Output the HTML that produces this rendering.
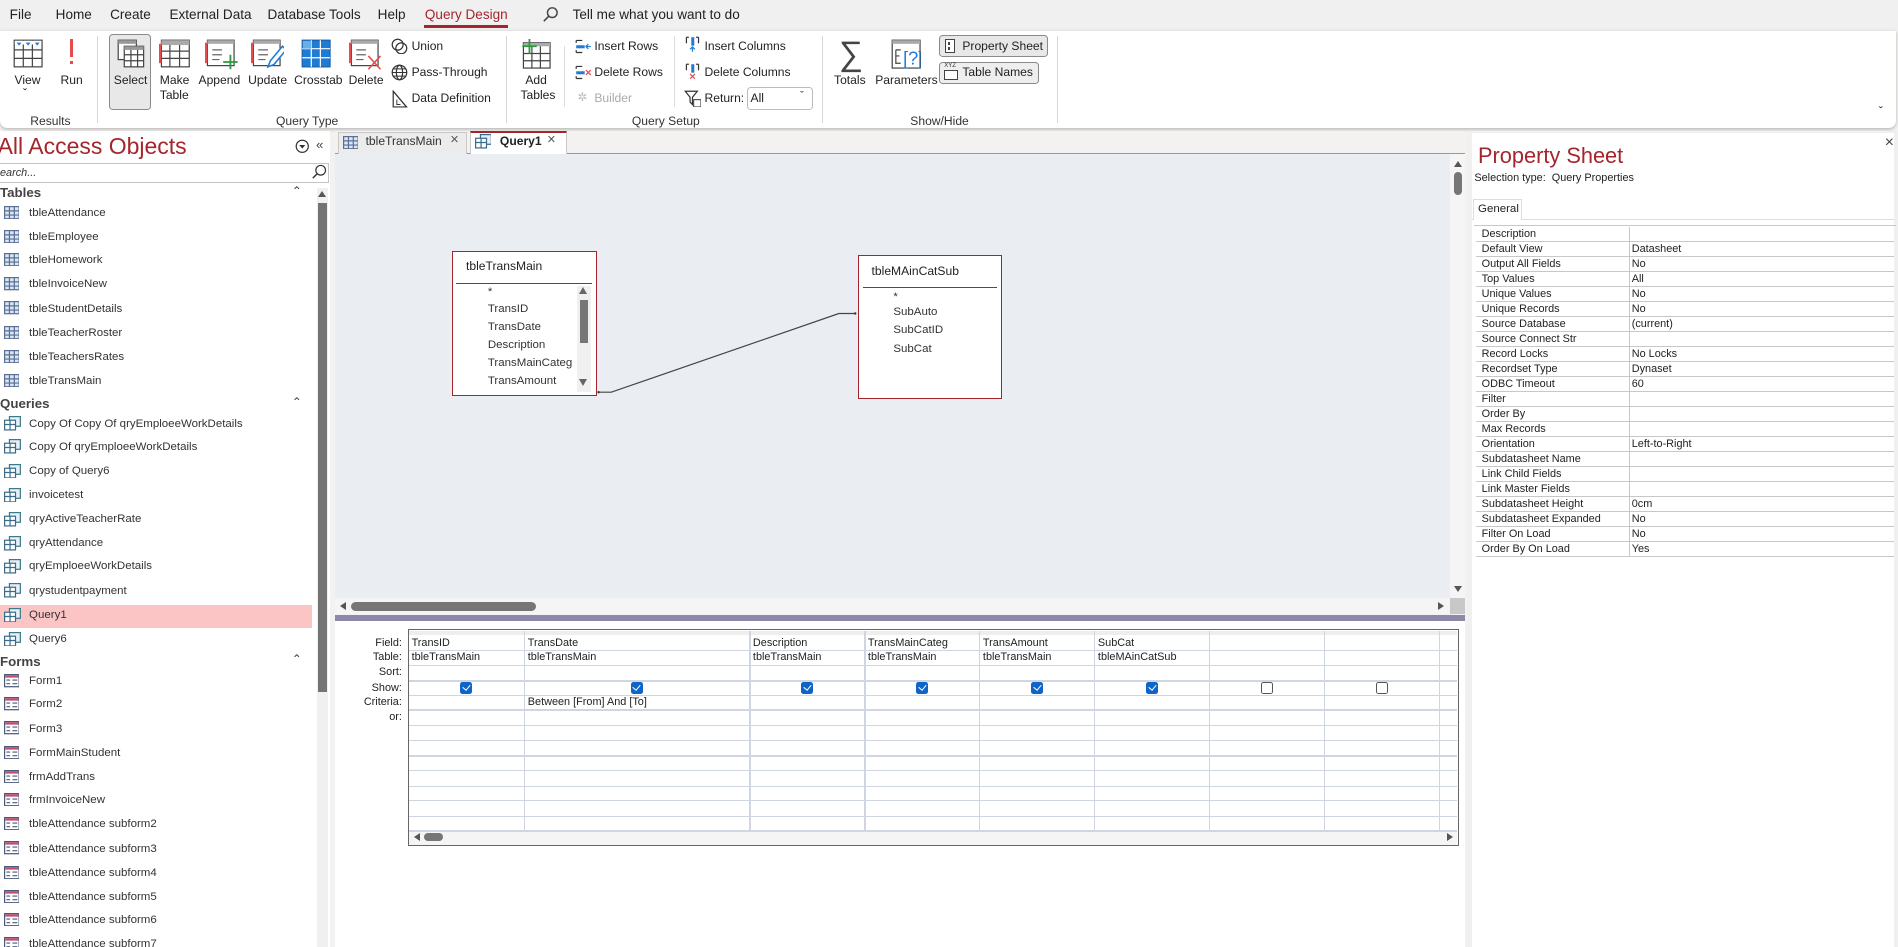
<!DOCTYPE html>
<html><head><meta charset="utf-8"><style>
*{margin:0;padding:0;box-sizing:border-box}
html,body{width:1898px;height:947px;overflow:hidden;background:#f3f2f1}
#r{zoom:1.2105;position:relative;width:1568px;height:782px;font-family:"Liberation Sans",sans-serif;color:#222;overflow:hidden;background:#f3f2f1}
.a{position:absolute;white-space:nowrap}
.m{font-size:11.2px;color:#222}
.s{font-size:10px}
.x{font-size:9.5px;color:#333}
.gl{font-size:10px;color:#333}
.sep{position:absolute;width:1px;background:#d6d6d6;top:30px;height:72px}
.ni{position:absolute;left:24px;font-size:9.5px;color:#333}
.ic{position:absolute;left:3px;width:14px;height:12px}
.ic svg{display:block}
.nh{position:absolute;left:0;font-size:11px;font-weight:bold;color:#444}
.pr{position:absolute;left:1219px;width:346px;height:12.4px;border-bottom:1.5px solid #c8c8c8;font-size:9px;color:#222}
.pr span{position:absolute;top:1px}
.pr i{position:absolute;left:127px;top:0;bottom:-1px;border-left:1.5px solid #c8c8c8}
.gr{position:absolute;left:338px;width:866px;height:1px;background:#cfd6e2}
.gc{position:absolute;top:521px;height:165px;width:1px;background:#cfd6e2}
.gt{position:absolute;font-size:9px;color:#222}
.gl2{position:absolute;right:1236px;font-size:9px;color:#222;text-align:right}
.cb{position:absolute;width:10px;height:10px;border-radius:2px;background:#0f64c8}
.cb:after{content:"";position:absolute;left:3px;top:1.5px;width:3px;height:5px;border:solid #fff;border-width:0 1px 1px 0;transform:rotate(40deg)}
.cbe{position:absolute;width:10px;height:10px;border-radius:2px;border:1px solid #555;background:#fff}
.fld{position:absolute;font-size:9.5px;color:#333}
</style></head><body><div id="r">
<div class="a" style="left:0;top:0;width:1568px;height:26px;background:#f0f0f0"></div>
<div class="a m" style="left:8px;top:6px">File</div>
<div class="a m" style="left:46px;top:6px">Home</div>
<div class="a m" style="left:91px;top:6px">Create</div>
<div class="a m" style="left:140px;top:6px">External Data</div>
<div class="a m" style="left:221px;top:6px">Database Tools</div>
<div class="a m" style="left:312px;top:6px">Help</div>
<div class="a m" style="left:351px;top:6px;color:#a4262c">Query Design</div>
<div class="a" style="left:350px;top:21px;width:70px;height:2px;background:#a4262c"></div>
<svg class="a" style="left:448px;top:5px" width="14" height="14"><circle cx="8.5" cy="5.5" r="4" fill="none" stroke="#444" stroke-width="1.2"/><line x1="5.5" y1="8.5" x2="1.5" y2="12.5" stroke="#444" stroke-width="1.3"/></svg>
<div class="a m" style="left:473px;top:6px">Tell me what you want to do</div>
<div class="a" style="left:0;top:26px;width:1566px;height:80px;background:#fff;border-radius:0 0 6px 6px;box-shadow:0 1px 3px rgba(0,0,0,.25)"></div>
<svg class="a" style="left:11px;top:32px" width="25" height="24"><rect x="1" y="1" width="23" height="22" fill="#fff" stroke="#444"/><line x1="1" y1="9" x2="24" y2="9" stroke="#444"/><line x1="1" y1="16" x2="24" y2="16" stroke="#444"/><line x1="8.5" y1="1" x2="8.5" y2="23" stroke="#444"/><line x1="16" y1="1" x2="16" y2="23" stroke="#444"/><rect x="1.5" y="1.5" width="22" height="3" fill="#fff"/><path d="M3 3h4l-2 2.5zM10.5 3h4l-2 2.5zM18 3h4l-2 2.5z" fill="#1e7bd6"/></svg>
<div class="a s" style="left:12px;top:60px">View</div>
<div class="a s" style="left:19px;top:71px">ˇ</div>
<div class="a" style="left:58px;top:32px;width:2px;height:15px;background:#e74c4c"></div>
<div class="a" style="left:58px;top:50px;width:2px;height:3px;background:#e74c4c"></div>
<div class="a s" style="left:50px;top:60px">Run</div>
<div class="sep" style="left:80px"></div>
<div class="a gl" style="left:25px;top:94px">Results</div>
<div class="a" style="left:90px;top:28px;width:35px;height:63px;background:#e8e8e8;border:1px solid #8a8a8a;border-radius:3px"></div>
<svg class="a" style="left:97px;top:32px" width="24" height="25"><rect x="1" y="1" width="15" height="16" fill="#fff" stroke="#444"/><rect x="1" y="1" width="15" height="3" fill="#999"/><rect x="6" y="6" width="16" height="17" fill="#fff" stroke="#444"/><rect x="6" y="6" width="16" height="3" fill="#999"/><path d="M6 13h16M6 18h16M11.5 9v14M17 9v14" stroke="#444" fill="none"/></svg>
<div class="a s" style="left:94px;top:60px">Select</div>
<svg class="a" style="left:131px;top:32px" width="26" height="24"><rect x="2" y="1" width="23" height="22" fill="#fff" stroke="#444"/><rect x="2" y="1" width="23" height="4" fill="#aaa"/><path d="M2 10h23M2 16h23M9 5v18M17 5v18" stroke="#444" fill="none"/><line x1="1" y1="4" x2="1" y2="20" stroke="#e74c4c" stroke-width="2"/></svg>
<div class="a s" style="left:132px;top:60px">Make</div><div class="a s" style="left:132px;top:73px">Table</div>
<svg class="a" style="left:169px;top:32px" width="28" height="26"><rect x="2" y="1" width="22" height="21" fill="#fff" stroke="#444"/><rect x="2" y="1" width="22" height="3" fill="#aaa"/><path d="M6 9h8M6 13h8M6 17h6" stroke="#666" fill="none"/><line x1="1" y1="3" x2="1" y2="20" stroke="#e74c4c" stroke-width="2"/><path d="M21 13v12M15 19h12" stroke="#2a9a3a" stroke-width="1.5"/></svg>
<div class="a s" style="left:164px;top:60px">Append</div>
<svg class="a" style="left:207px;top:32px" width="28" height="26"><rect x="2" y="1" width="22" height="21" fill="#fff" stroke="#444"/><rect x="2" y="1" width="22" height="3" fill="#aaa"/><path d="M6 9h8M6 13h8M6 17h6" stroke="#666" fill="none"/><line x1="1" y1="3" x2="1" y2="20" stroke="#e74c4c" stroke-width="2"/><path d="M26 6l-10 12-2 5 5-2 10-12z" fill="#fff" stroke="#1e7bd6" stroke-width="1.3"/></svg>
<div class="a s" style="left:205px;top:60px">Update</div>
<svg class="a" style="left:249px;top:32px" width="25" height="24"><rect x="1" y="1" width="23" height="22" fill="#1e7bd6" stroke="#1a5fa8"/><path d="M1 8h23M1 15.5h23M8.5 1v22M16 1v22" stroke="#fff" fill="none"/><rect x="1.5" y="1.5" width="7" height="6.5" fill="#6aaee8"/></svg>
<div class="a s" style="left:243px;top:60px">Crosstab</div>
<svg class="a" style="left:288px;top:32px" width="28" height="26"><rect x="2" y="1" width="22" height="21" fill="#fff" stroke="#444"/><rect x="2" y="1" width="22" height="3" fill="#aaa"/><path d="M6 9h8M6 13h8M6 17h6" stroke="#666" fill="none"/><line x1="1" y1="3" x2="1" y2="20" stroke="#e74c4c" stroke-width="2"/><path d="M16 14l10 11M26 14l-10 11" stroke="#e74c4c" stroke-width="1.3"/></svg>
<div class="a s" style="left:288px;top:60px">Delete</div>
<svg class="a" style="left:323px;top:31px" width="14" height="14"><circle cx="5.5" cy="5.5" r="4.5" fill="none" stroke="#333"/><circle cx="8.5" cy="8.5" r="4.5" fill="none" stroke="#333"/></svg>
<div class="a s" style="left:340px;top:32px">Union</div>
<svg class="a" style="left:323px;top:53px" width="14" height="14"><circle cx="7" cy="7" r="6" fill="none" stroke="#333"/><ellipse cx="7" cy="7" rx="2.6" ry="6" fill="none" stroke="#333"/><path d="M1 7h12M2 4h10M2 10h10" stroke="#333" fill="none" stroke-width=".8"/></svg>
<div class="a s" style="left:340px;top:54px">Pass-Through</div>
<svg class="a" style="left:324px;top:74px" width="13" height="15"><path d="M1 1v13h11z" fill="none" stroke="#333"/><path d="M1 1l11 13M4 8v4h3" stroke="#333" fill="none" stroke-width=".8"/></svg>
<div class="a s" style="left:340px;top:75px">Data Definition</div>
<div class="sep" style="left:418px"></div>
<div class="a gl" style="left:228px;top:94px">Query Type</div>
<svg class="a" style="left:430px;top:32px" width="26" height="25"><rect x="2" y="3" width="22" height="21" fill="#fff" stroke="#444"/><rect x="2" y="3" width="22" height="3" fill="#aaa"/><path d="M2 12h22M2 18h22M9 6v18M16 6v18" stroke="#444" fill="none"/><path d="M7 0v12M1 6h12" stroke="#2a9a3a" stroke-width="1.5"/></svg>
<div class="a s" style="left:434px;top:60px">Add</div><div class="a s" style="left:430px;top:73px">Tables</div>
<div class="a" style="left:466px;top:38px;width:1px;height:50px;background:#ddd"></div>
<svg class="a" style="left:475px;top:31px" width="14" height="14"><path d="M1 2h5M1 12h5M1 2v2M1 10v2" stroke="#333" fill="none"/><rect x="1" y="6" width="7" height="2.5" fill="#1e7bd6"/><path d="M13 7H9M11 5l-2 2 2 2" stroke="#1e7bd6" fill="none"/></svg>
<div class="a s" style="left:491px;top:32px">Insert Rows</div>
<svg class="a" style="left:475px;top:53px" width="14" height="14"><path d="M1 2h5M1 12h5M1 2v2M1 10v2" stroke="#333" fill="none"/><rect x="1" y="6" width="7" height="2.5" fill="#1e7bd6"/><path d="M9 5l4 4M13 5l-4 4" stroke="#e74c4c"/></svg>
<div class="a s" style="left:491px;top:54px">Delete Rows</div>
<div class="a s" style="left:477px;top:74px;color:#bbb">✲</div>
<div class="a s" style="left:491px;top:75px;color:#aaa">Builder</div>
<div class="a" style="left:557px;top:30px;width:1px;height:58px;background:#ddd"></div>
<svg class="a" style="left:565px;top:30px" width="14" height="14"><path d="M2 1v5M12 1v5M2 1h2M10 1h2" stroke="#333" fill="none"/><rect x="6" y="1" width="2.5" height="7" fill="#1e7bd6"/><path d="M7 13V9M5 11l2-2 2 2" stroke="#1e7bd6" fill="none"/></svg>
<div class="a s" style="left:582px;top:32px">Insert Columns</div>
<svg class="a" style="left:565px;top:52px" width="14" height="14"><path d="M2 1v5M12 1v5M2 1h2M10 1h2" stroke="#333" fill="none"/><rect x="6" y="1" width="2.5" height="7" fill="#1e7bd6"/><path d="M5 9l4 4M9 9l-4 4" stroke="#e74c4c"/></svg>
<div class="a s" style="left:582px;top:54px">Delete Columns</div>
<svg class="a" style="left:565px;top:74px" width="14" height="14"><path d="M1 1h10l-4 5v6l-2-2V6z" fill="none" stroke="#333"/><rect x="8" y="8" width="6" height="6" fill="#fff" stroke="#333" stroke-width=".8"/></svg>
<div class="a s" style="left:582px;top:75px">Return:</div>
<div class="a" style="left:617px;top:72px;width:55px;height:19px;border:1px solid #bbb;border-radius:3px;background:#fff"></div>
<div class="a s" style="left:620px;top:75px">All</div>
<div class="a s" style="left:661px;top:74px;font-size:9px">ˇ</div>
<div class="sep" style="left:679px"></div>
<div class="a gl" style="left:522px;top:94px">Query Setup</div>
<div class="a" style="left:693px;top:28px;font-size:28px;font-family:'DejaVu Sans',sans-serif;color:#444;font-weight:200">∑</div>
<div class="a s" style="left:689px;top:60px">Totals</div>
<svg class="a" style="left:736px;top:32px" width="25" height="25"><rect x="1" y="1" width="23" height="23" fill="#fff" stroke="#444"/><rect x="1" y="1" width="23" height="3" fill="#aaa"/><path d="M4 9h4M4 9v11h4M4 14h3" stroke="#444" fill="none"/><text x="10" y="21" font-size="15" fill="#1e7bd6" font-family="Liberation Sans">[?]</text></svg>
<div class="a s" style="left:723px;top:60px">Parameters</div>
<div class="a" style="left:776px;top:29px;width:90px;height:18px;background:#e8e8e8;border:1px solid #8a8a8a;border-radius:3px"></div>
<div class="a" style="left:781px;top:32px;width:8px;height:12px;border:1px solid #444;background:#fff"></div>
<div class="a" style="left:783px;top:35px;width:2px;height:2px;background:#444"></div><div class="a" style="left:783px;top:39px;width:2px;height:2px;background:#444"></div>
<div class="a s" style="left:795px;top:32px">Property Sheet</div>
<div class="a" style="left:776px;top:51px;width:82px;height:18px;background:#eee;border:1px solid #8a8a8a;border-radius:3px"></div>
<div class="a" style="left:780px;top:52px;font-size:5px;color:#333">XYZ</div>
<div class="a" style="left:780px;top:58px;width:11px;height:8px;border:1px solid #444;background:#fff"></div>
<div class="a s" style="left:795px;top:54px">Table Names</div>
<div class="sep" style="left:873px"></div>
<div class="a gl" style="left:752px;top:94px">Show/Hide</div>
<div class="a s" style="left:1552px;top:86px">ˇ</div>
<div class="a" style="left:0;top:108px;width:273px;height:674px;background:#fff"></div>
<div class="a" style="left:-2px;top:110px;font-size:19px;color:#a4262c">All Access Objects</div>
<svg class="a" style="left:244px;top:115px" width="12" height="12"><circle cx="6" cy="6" r="5" fill="none" stroke="#333"/><path d="M3.5 5h5L6 8z" fill="#333"/></svg>
<div class="a" style="left:261px;top:113px;font-size:11px;color:#444">«</div>
<div class="a" style="left:0;top:135px;width:272px;height:16px;border:1px solid #c4c4c4;border-left:none;background:#fff"></div>
<div class="a" style="left:0;top:138px;font-size:9px;font-style:italic;color:#333">earch...</div>
<svg class="a" style="left:257px;top:135px" width="14" height="14"><circle cx="8" cy="6" r="4" fill="none" stroke="#333"/><line x1="5" y1="9" x2="1.5" y2="12.5" stroke="#333" stroke-width="1.2"/></svg>
<div class="a" style="left:262px;top:155px;width:9px;height:627px;background:#f0f0f0"></div>
<div class="a" style="left:263px;top:168px;width:7px;height:404px;background:#747474"></div>
<div class="a" style="left:263px;top:158px;width:0;height:0;border:3.5px solid transparent;border-bottom:5px solid #555;border-top:none"></div>
<div class="nh" style="top:153px">Tables</div>
<div class="a" style="left:241px;top:152px;font-size:10px;color:#444">⌃</div>
<div class="nh" style="top:327px">Queries</div>
<div class="a" style="left:241px;top:326px;font-size:10px;color:#444">⌃</div>
<div class="a" style="left:0;top:500px;width:258px;height:19px;background:#fcc5c5"></div>
<div class="nh" style="top:540px">Forms</div>
<div class="a" style="left:241px;top:539px;font-size:10px;color:#444">⌃</div>
<div id="nav"></div>
<div class="a" style="left:277px;top:108px;width:933px;height:19px;background:#f3f2f1;border-bottom:1px solid #999"></div>
<div class="a" style="left:279px;top:109px;width:107px;height:18px;background:#ececec;border:1px solid #c8c8c8;border-bottom:none"></div>
<svg class="a" style="left:283px;top:112px" width="13" height="11"><rect x=".5" y=".5" width="12" height="10" fill="#dbe6f5" stroke="#5a6f94"/><path d="M.5 4h12M.5 7.5h12M4.5.5v10M8.5.5v10" stroke="#5a6f94"/></svg>
<div class="a" style="left:302px;top:111px;font-size:10px;color:#333">tbleTransMain</div>
<div class="a" style="left:372px;top:109px;font-size:12px;color:#555">×</div>
<div class="a" style="left:388px;top:108px;width:80px;height:20px;background:#fff;border-top:2px solid #a4262c;border-left:1px solid #c8c8c8;border-right:1px solid #c8c8c8"></div>
<svg class="a" style="left:392px;top:111px" width="14" height="12"><rect x="4.5" y=".5" width="9" height="8" fill="#e8eef6" stroke="#3a6c8a"/><rect x=".5" y="3.5" width="9" height="8" fill="#fff" stroke="#3a6c8a"/><path d="M.5 7h9M5 3.5v8" stroke="#3a6c8a"/></svg>
<div class="a" style="left:413px;top:111px;font-size:10px;font-weight:bold;color:#222">Query1</div>
<div class="a" style="left:452px;top:109px;font-size:12px;color:#555">×</div>
<div class="a" style="left:277px;top:127px;width:921px;height:367px;background:#eaeef2"></div>
<div class="a" style="left:1198px;top:127px;width:12px;height:367px;background:#f5f5f5"></div>
<div class="a" style="left:1201px;top:133px;border:3.5px solid transparent;border-bottom:5px solid #555;border-top:none"></div>
<div class="a" style="left:1201px;top:142px;width:7px;height:19px;background:#767676;border-radius:4px"></div>
<div class="a" style="left:1201px;top:484px;border:3.5px solid transparent;border-top:5px solid #555;border-bottom:none"></div>
<div class="a" style="left:277px;top:494px;width:921px;height:13px;background:#f5f5f5"></div>
<div class="a" style="left:1198px;top:494px;width:12px;height:13px;background:#c8c8c8"></div>
<div class="a" style="left:281px;top:497px;border:3.5px solid transparent;border-right:5px solid #555;border-left:none"></div>
<div class="a" style="left:290px;top:497px;width:153px;height:8px;background:#767676;border-radius:4px"></div>
<div class="a" style="left:1188px;top:497px;border:3.5px solid transparent;border-left:5px solid #555;border-right:none"></div>
<div class="a" style="left:277px;top:508px;width:933px;height:5px;background:#8c8aa8"></div>
<div class="a" style="left:373px;top:207px;width:120px;height:120px;background:#fff;border:1px solid #a4262c"></div>
<div class="a" style="left:385px;top:214px;font-size:10px;color:#222">tbleTransMain</div>
<div class="a" style="left:377px;top:234px;width:112px;height:1px;background:#a4262c"></div>
<div class="a" style="left:477px;top:236px;width:11px;height:88px;background:#f0f0f0"></div>
<div class="a" style="left:478px;top:237px;border:4px solid transparent;border-bottom:6px solid #666;border-top:none"></div>
<div class="a" style="left:479px;top:248px;width:7px;height:35px;background:#767676"></div>
<div class="a" style="left:478px;top:313px;border:4px solid transparent;border-top:6px solid #666;border-bottom:none"></div>
<div class="fld" style="left:403px;top:236px">*</div>
<div class="fld" style="left:403px;top:250px">TransID</div>
<div class="fld" style="left:403px;top:265px">TransDate</div>
<div class="fld" style="left:403px;top:280px">Description</div>
<div class="fld" style="left:403px;top:295px">TransMainCateg</div>
<div class="fld" style="left:403px;top:310px">TransAmount</div>
<div class="a" style="left:709px;top:211px;width:119px;height:119px;background:#fff;border:1px solid #a4262c"></div>
<div class="a" style="left:720px;top:218px;font-size:10px;color:#222">tbleMAinCatSub</div>
<div class="a" style="left:713px;top:237px;width:111px;height:1px;background:#a4262c"></div>
<div class="fld" style="left:738px;top:240px">*</div>
<div class="fld" style="left:738px;top:253px">SubAuto</div>
<div class="fld" style="left:738px;top:268px">SubCatID</div>
<div class="fld" style="left:738px;top:283px">SubCat</div>
<svg class="a" style="left:0;top:0" width="1568" height="782"><polyline points="494,324 505,324 693,259 707,259" fill="none" stroke="#444" stroke-width="1"/><circle cx="494.5" cy="324" r="1" fill="#333"/><circle cx="706.5" cy="259" r="1" fill="#333"/></svg>
<div class="a" style="left:277px;top:513px;width:933px;height:269px;background:#fff"></div>
<div class="a" style="left:337px;top:520px;width:868px;height:179px;border:1px solid #666;background:#fff"></div>
<div class="a" style="left:338px;top:521px;width:866px;height:4px;background:#eee"></div>
<div class="a" style="left:338px;top:686px;width:866px;height:12px;background:#f5f5f5"></div>
<div class="a" style="left:342px;top:688px;border:3.5px solid transparent;border-right:5px solid #555;border-left:none"></div>
<div class="a" style="left:350px;top:688px;width:16px;height:7px;background:#767676;border-radius:4px"></div>
<div class="a" style="left:1195px;top:688px;border:3.5px solid transparent;border-left:5px solid #555;border-right:none"></div>
<div id="grid"></div>
<div class="gt" style="left:340px;top:526px">TransID</div>
<div class="gt" style="left:436px;top:526px">TransDate</div>
<div class="gt" style="left:622px;top:526px">Description</div>
<div class="gt" style="left:717px;top:526px">TransMainCateg</div>
<div class="gt" style="left:812px;top:526px">TransAmount</div>
<div class="gt" style="left:907px;top:526px">SubCat</div>
<div class="gt" style="left:340px;top:538px">tbleTransMain</div>
<div class="gt" style="left:436px;top:538px">tbleTransMain</div>
<div class="gt" style="left:622px;top:538px">tbleTransMain</div>
<div class="gt" style="left:717px;top:538px">tbleTransMain</div>
<div class="gt" style="left:812px;top:538px">tbleTransMain</div>
<div class="gt" style="left:907px;top:538px">tbleMAinCatSub</div>
<div class="gt" style="left:436px;top:575px">Between [From] And [To]</div>
<div class="cb" style="left:380px;top:563px"></div>
<div class="cb" style="left:521px;top:563px"></div>
<div class="cb" style="left:662px;top:563px"></div>
<div class="cb" style="left:757px;top:563px"></div>
<div class="cb" style="left:852px;top:563px"></div>
<div class="cb" style="left:947px;top:563px"></div>
<div class="cbe" style="left:1042px;top:563px"></div>
<div class="cbe" style="left:1137px;top:563px"></div>
<div class="gl2" style="top:526px">Field:</div>
<div class="gl2" style="top:538px">Table:</div>
<div class="gl2" style="top:550px">Sort:</div>
<div class="gl2" style="top:563px">Show:</div>
<div class="gl2" style="top:575px">Criteria:</div>
<div class="gl2" style="top:587px">or:</div>
<div class="a" style="left:1212px;top:108px;width:356px;height:674px;background:#f0f0f0"></div>
<div class="a" style="left:1216px;top:110px;width:349px;height:672px;background:#fff"></div>
<div class="a" style="left:1221px;top:118px;font-size:18px;color:#a4262c">Property Sheet</div>
<div class="a" style="left:1557px;top:111px;font-size:13px;color:#444">×</div>
<div class="a" style="left:1218px;top:142px;font-size:9px;color:#222">Selection type:&nbsp; Query Properties</div>
<div class="a" style="left:1216px;top:181px;width:349px;height:1px;background:#ddd"></div>
<div class="a" style="left:1217px;top:164px;width:40px;height:18px;background:#fff;border:1px solid #ddd;border-bottom:none"></div>
<div class="a" style="left:1221px;top:168px;font-size:9.5px;color:#222">General</div>
<div id="ps"></div>
<script>
var nav=[[177,'tbleAttendance',0],[197,'tbleEmployee',0],[216,'tbleHomework',0],[236,'tbleInvoiceNew',0],[256,'tbleStudentDetails',0],[276,'tbleTeacherRoster',0],[296,'tbleTeachersRates',0],[316,'tbleTransMain',0],
[351,'Copy Of Copy Of qryEmploeeWorkDetails',1],[370,'Copy Of qryEmploeeWorkDetails',1],[390,'Copy of Query6',1],[410,'invoicetest',1],[430,'qryActiveTeacherRate',1],[450,'qryAttendance',1],[469,'qryEmploeeWorkDetails',1],[489,'qrystudentpayment',1],[509,'Query1',1],[529,'Query6',1],
[564,'Form1',2],[583,'Form2',2],[603,'Form3',2],[623,'FormMainStudent',2],[643,'frmAddTrans',2],[662,'frmInvoiceNew',2],[682,'tbleAttendance subform2',2],[702,'tbleAttendance subform3',2],[722,'tbleAttendance subform4',2],[742,'tbleAttendance subform5',2],[761,'tbleAttendance subform6',2],[781,'tbleAttendance subform7',2]];
var ic=['<svg width="13" height="11"><rect x=".5" y=".5" width="12" height="10" fill="#dbe6f5" stroke="#5a6f94"/><path d="M.5 4h12M.5 7.5h12M4.5.5v10M8.5.5v10" stroke="#5a6f94"/></svg>',
'<svg width="14" height="12"><rect x="4.5" y=".5" width="9" height="8" fill="#e8eef6" stroke="#3a7a8a"/><rect x=".5" y="3.5" width="9" height="8" fill="#fff" stroke="#3a6c8a"/><path d="M.5 7h9M5 3.5v8" stroke="#3a6c8a"/></svg>',
'<svg width="13" height="11"><rect x=".5" y=".5" width="12" height="10" fill="#fff" stroke="#4a5a7a"/><rect x="1" y="1" width="11" height="2" fill="#c05070"/><path d="M2 5h3M2 8h3M7 5h4M7 8h4" stroke="#4a5a7a"/></svg>'];
var h='';nav.forEach(function(n){h+='<div class="ic" style="top:'+(n[0]-7)+'px">'+ic[n[2]]+'</div><div class="ni" style="top:'+(n[0]-6)+'px">'+n[1]+'</div>';});
document.getElementById('nav').outerHTML=h;
var g='';[537,549,562,574,586,599,611,624,636,649,661,674,686].forEach(function(y){g+='<div class="gr" style="top:'+y+'px"></div>';});
[433,619,714,809,904,999,1094,1189].forEach(function(x){g+='<div class="gc" style="left:'+x+'px"></div>';});
document.getElementById('grid').outerHTML=g;
var ps=[['Description',''],['Default View','Datasheet'],['Output All Fields','No'],['Top Values','All'],['Unique Values','No'],['Unique Records','No'],['Source Database','(current)'],['Source Connect Str',''],['Record Locks','No Locks'],['Recordset Type','Dynaset'],['ODBC Timeout','60'],['Filter',''],['Order By',''],['Max Records',''],['Orientation','Left-to-Right'],['Subdatasheet Name',''],['Link Child Fields',''],['Link Master Fields',''],['Subdatasheet Height','0cm'],['Subdatasheet Expanded','No'],['Filter On Load','No'],['Order By On Load','Yes']];
var p='<div class="a" style="left:1218px;top:186px;width:348px;height:275px;border-top:1.5px solid #c8c8c8"></div>';
ps.forEach(function(r,i){p+='<div class="pr" style="top:'+(187.5+i*12.4)+'px"><span style="left:5px">'+r[0]+'</span><i></i><span style="left:129px">'+r[1]+'</span></div>';});
document.getElementById('ps').outerHTML=p;
</script>
</div></body></html>
